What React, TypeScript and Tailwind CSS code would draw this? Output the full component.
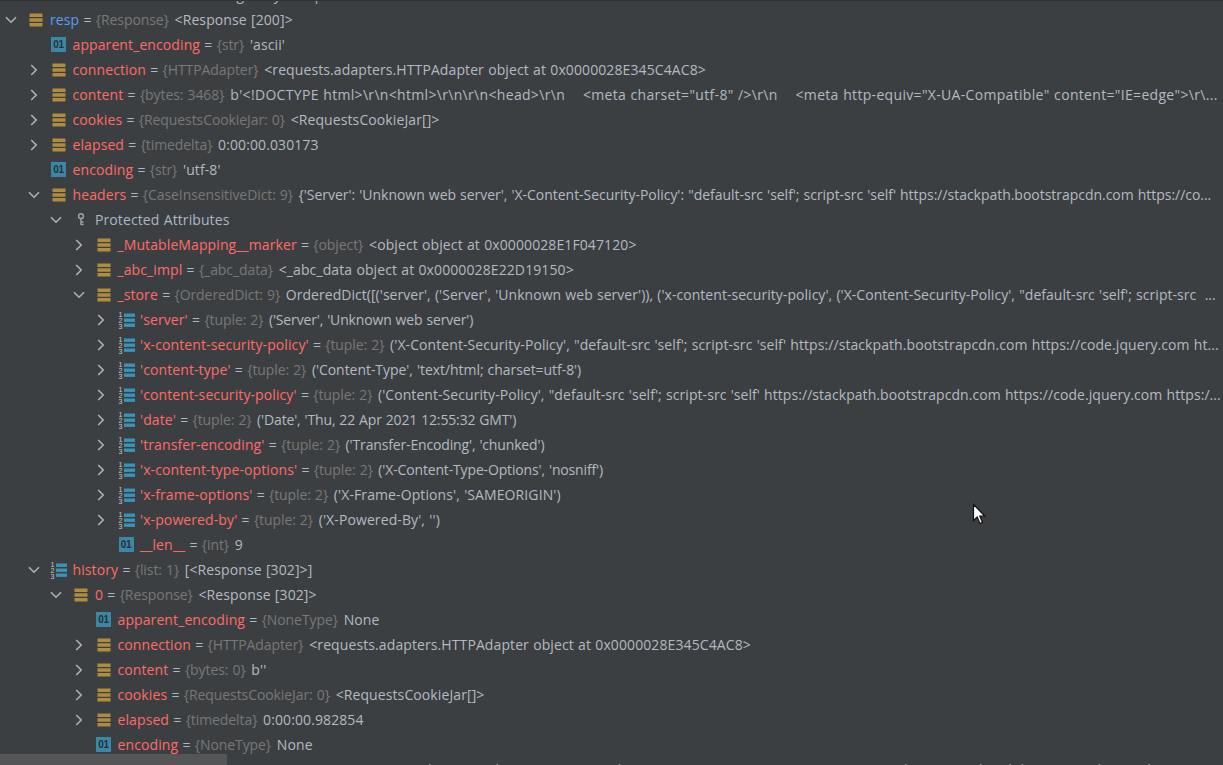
import React from "react";

type IconKind = "field" | "num" | "list" | "key";
type RowData = {
  level: number;
  arrow?: "open" | "closed";
  icon: IconKind;
  name: string;
  type?: string;
  value?: string;
  blue?: boolean;
  plain?: boolean;
  fit?: string;
};

const LEVELS = ["pl-0", "pl-[22.5px]", "pl-[45px]", "pl-[67.5px]", "pl-[90px]"];
const QUOTED = "tracking-[-0.15px]";

const rows: RowData[] = [
  { level: 0, arrow: "open", icon: "field", name: "resp", type: "{Response}", value: "<Response [200]>", blue: true },
  { level: 1, icon: "num", name: "apparent_encoding", type: "{str}", value: "'ascii'" },
  { level: 1, arrow: "closed", icon: "field", name: "connection", type: "{HTTPAdapter}", value: "<requests.adapters.HTTPAdapter object at 0x0000028E345C4AC8>" },
  { level: 1, arrow: "closed", icon: "field", name: "content", type: "{bytes: 3468}", fit: "tracking-[0.32px]", value: "b'<!DOCTYPE html>\\r\\n<html>\\r\\n\\r\\n<head>\\r\\n    <meta charset=\"utf-8\" />\\r\\n    <meta http-equiv=\"X-UA-Compatible\" content=\"IE=edge\">\\r\\..." },
  { level: 1, arrow: "closed", icon: "field", name: "cookies", type: "{RequestsCookieJar: 0}", value: "<RequestsCookieJar[]>" },
  { level: 1, arrow: "closed", icon: "field", name: "elapsed", type: "{timedelta}", value: "0:00:00.030173" },
  { level: 1, icon: "num", name: "encoding", type: "{str}", value: "'utf-8'" },
  { level: 1, arrow: "open", icon: "field", name: "headers", type: "{CaseInsensitiveDict: 9}", fit: "tracking-[-0.03px]", value: "{'Server': 'Unknown web server', 'X-Content-Security-Policy': \"default-src 'self'; script-src 'self' https://stackpath.bootstrapcdn.com https://co..." },
  { level: 2, arrow: "open", icon: "key", name: "Protected Attributes", plain: true },
  { level: 3, arrow: "closed", icon: "field", name: "_MutableMapping__marker", type: "{object}", value: "<object object at 0x0000028E1F047120>" },
  { level: 3, arrow: "closed", icon: "field", name: "_abc_impl", type: "{_abc_data}", value: "<_abc_data object at 0x0000028E22D19150>" },
  { level: 3, arrow: "open", icon: "field", name: "_store", type: "{OrderedDict: 9}", fit: "tracking-[0.04px]", value: "OrderedDict([('server', ('Server', 'Unknown web server')), ('x-content-security-policy', ('X-Content-Security-Policy', \"default-src 'self'; script-src  ..." },
  { level: 4, arrow: "closed", icon: "list", name: "'server'", type: "{tuple: 2}", fit: QUOTED, value: "('Server', 'Unknown web server')" },
  { level: 4, arrow: "closed", icon: "list", name: "'x-content-security-policy'", type: "{tuple: 2}", fit: "tracking-[0.08px]", value: "('X-Content-Security-Policy', \"default-src 'self'; script-src 'self' https://stackpath.bootstrapcdn.com https://code.jquery.com ht..." },
  { level: 4, arrow: "closed", icon: "list", name: "'content-type'", type: "{tuple: 2}", fit: "tracking-[-0.05px]", value: "('Content-Type', 'text/html; charset=utf-8')" },
  { level: 4, arrow: "closed", icon: "list", name: "'content-security-policy'", type: "{tuple: 2}", fit: "tracking-[0.06px]", value: "('Content-Security-Policy', \"default-src 'self'; script-src 'self' https://stackpath.bootstrapcdn.com https://code.jquery.com https:/..." },
  { level: 4, arrow: "closed", icon: "list", name: "'date'", type: "{tuple: 2}", fit: QUOTED, value: "('Date', 'Thu, 22 Apr 2021 12:55:32 GMT')" },
  { level: 4, arrow: "closed", icon: "list", name: "'transfer-encoding'", type: "{tuple: 2}", fit: QUOTED, value: "('Transfer-Encoding', 'chunked')" },
  { level: 4, arrow: "closed", icon: "list", name: "'x-content-type-options'", type: "{tuple: 2}", fit: QUOTED, value: "('X-Content-Type-Options', 'nosniff')" },
  { level: 4, arrow: "closed", icon: "list", name: "'x-frame-options'", type: "{tuple: 2}", value: "('X-Frame-Options', 'SAMEORIGIN')" },
  { level: 4, arrow: "closed", icon: "list", name: "'x-powered-by'", type: "{tuple: 2}", value: "('X-Powered-By', '')" },
  { level: 4, icon: "num", name: "__len__", type: "{int}", value: "9" },
  { level: 1, arrow: "open", icon: "list", name: "history", type: "{list: 1}", value: "[<Response [302]>]" },
  { level: 2, arrow: "open", icon: "field", name: "0", type: "{Response}", value: "<Response [302]>" },
  { level: 3, icon: "num", name: "apparent_encoding", type: "{NoneType}", value: "None" },
  { level: 3, arrow: "closed", icon: "field", name: "connection", type: "{HTTPAdapter}", value: "<requests.adapters.HTTPAdapter object at 0x0000028E345C4AC8>" },
  { level: 3, arrow: "closed", icon: "field", name: "content", type: "{bytes: 0}", value: "b''" },
  { level: 3, arrow: "closed", icon: "field", name: "cookies", type: "{RequestsCookieJar: 0}", value: "<RequestsCookieJar[]>" },
  { level: 3, arrow: "closed", icon: "field", name: "elapsed", type: "{timedelta}", value: "0:00:00.982854" },
  { level: 3, icon: "num", name: "encoding", type: "{NoneType}", value: "None" },
  { level: 3, arrow: "closed", icon: "field", name: "headers", type: "{CaseInsensitiveDict: 9}", value: "{'Server': 'Unknown web server', 'Date': 'Thu, 22 Apr 2021 12:55:32 GMT', 'Location': 'https://stackpath.bootstrapcdn.com/login?next=%2F', 'Set-Cookie': 'session=abc..." },
];

function Arrow({ dir }: { dir?: "open" | "closed" }) {
  return (
    <span className="flex w-[22px] shrink-0 items-center justify-center">
      {dir === "open" && (
        <svg width="12" height="8" viewBox="0 0 12 8" fill="none" stroke="#afb1b3" strokeWidth="1.6">
          <path d="M1 1.2 L6 6.2 L11 1.2" />
        </svg>
      )}
      {dir === "closed" && (
        <svg width="8" height="12" viewBox="0 0 8 12" fill="none" stroke="#afb1b3" strokeWidth="1.6">
          <path d="M1.2 1 L6.2 6 L1.2 11" />
        </svg>
      )}
    </span>
  );
}

function Icon({ kind }: { kind: IconKind }) {
  if (kind === "field") {
    return (
      <svg width="14" height="14" viewBox="0 0 14 14">
        <rect x="0.5" y="0.5" width="13" height="3.5" fill="#b08c3f" />
        <rect x="0.5" y="5.25" width="13" height="3.5" fill="#b08c3f" />
        <rect x="0.5" y="10" width="13" height="3.5" fill="#b08c3f" />
      </svg>
    );
  }
  if (kind === "num") {
    return (
      <span className="flex h-[15px] w-[15px] items-center justify-center bg-[#3a87a6] font-['Liberation_Sans',sans-serif] text-[10px] font-bold leading-none tracking-[-0.2px] text-[#2b3034]">
        01
      </span>
    );
  }
  if (kind === "list") {
    return (
      <svg width="17" height="18" viewBox="0 0 17 18">
        <rect x="6" y="2.5" width="11" height="3.4" fill="#3b93b8" />
        <rect x="6" y="7.5" width="11" height="3.4" fill="#3b93b8" />
        <rect x="6" y="12.5" width="11" height="3.4" fill="#3b93b8" />
        <text x="0.5" y="5.5" fontSize="7" fill="#c9cbcd" fontFamily="Liberation Sans">1</text>
        <text x="0.5" y="11.5" fontSize="7" fill="#c9cbcd" fontFamily="Liberation Sans">2</text>
        <text x="0.5" y="17.5" fontSize="7" fill="#c9cbcd" fontFamily="Liberation Sans">3</text>
      </svg>
    );
  }
  return (
    <svg width="8" height="13" viewBox="0 0 8 13" fill="none" stroke="#9da0a2" strokeWidth="1.5">
      <circle cx="4" cy="3.2" r="2.4" />
      <path d="M4 5.6 V12 M4 9 H6.5 M4 11.5 H6.5" />
    </svg>
  );
}

function Row({ row }: { row: RowData }) {
  return (
    <div className={`flex h-[25px] items-center ${LEVELS[row.level]}`}>
      <Arrow dir={row.arrow} />
      <span className="flex w-[28px] shrink-0 items-center justify-center">
        <Icon kind={row.icon} />
      </span>
      {row.plain ? (
        <span className="text-[#a9b7c6]">{row.name}</span>
      ) : (
        <span>
          <span className={row.blue ? "text-[#589df6]" : "text-[#ff6b68]"}>{row.name}</span>
          <span className="text-[#a9b7c6]"> = </span>
          <span className="tracking-[-0.08px] text-[#787878]">{row.type}</span>
          <span className={`ml-[1.5px] text-[#b3bac2] ${row.fit ?? ""}`}> {row.value}</span>
        </span>
      )}
    </div>
  );
}

export default function App() {
  return (
    <div className="relative h-[765px] w-[1223px] overflow-hidden whitespace-pre bg-[#3c3f41] font-['Open_Sans',sans-serif] text-[14px] leading-[25px] tracking-[0.1px] [word-spacing:0.5px]">
      <div className="relative z-10 h-px bg-[#323232]" />
      <div className="mt-[-19px]">
        <div className="h-[25px] pl-[50px] text-[#a9b7c6]">{"                                            g       y        p"}</div>
        {rows.map((r, i) => (
          <Row key={i} row={r} />
        ))}
      </div>
      <div className="absolute bottom-0 left-0 h-[11px] w-[227px] bg-[#545556]" />
      <svg className="absolute left-[972px] top-[503px]" width="15" height="23" viewBox="0 0 15 23">
        <path d="M1.5 1.5 V17.5 L5.2 14 L8 20.5 L10.5 19.4 L7.8 13 H12.8 Z" fill="#fff" stroke="#111" strokeWidth="1.2" />
      </svg>
    </div>
  );
}
